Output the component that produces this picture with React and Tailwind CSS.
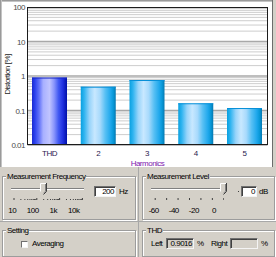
import React from "react";

const PLOT = { left: 27.5, top: 7.5, right: 267.5, bottom: 144.5 };
const DECADE = (145 - 7) / 4;

function yOf(v) {
  return 7 + (2 - Math.log10(v)) * DECADE;
}

const BARS = [
  { label: "THD", value: 0.9016, fill: "url(#thd)", edge: "#1828c8" },
  { label: "2", value: 0.49, fill: "url(#harm)", edge: "#0890d8" },
  { label: "3", value: 0.766, fill: "url(#harm)", edge: "#0890d8" },
  { label: "4", value: 0.162, fill: "url(#harm)", edge: "#0890d8" },
  { label: "5", value: 0.118, fill: "url(#harm)", edge: "#0890d8" },
];

const Y_LABELS = [
  { text: "100", y: 10 },
  { text: "10", y: 44.5 },
  { text: "1", y: 79 },
  { text: "0.1", y: 113.5 },
  { text: "0.01", y: 147.5 },
];

const FONT = "Liberation Sans, Arial, sans-serif";

function Chart() {
  const grid = [];
  for (let e = -2; e <= 1; e++) {
    for (let k = 1; k <= 9; k++) {
      grid.push({ y: yOf(k * 10 ** e), major: k === 1 });
    }
  }

  return (
    <svg width="276" height="167" className="block">
      <defs>
        <linearGradient id="thd" x1="0" x2="1" y1="0" y2="0">
          <stop offset="0" stopColor="#1a2ad0" />
          <stop offset="0.08" stopColor="#2a40ee" />
          <stop offset="0.2" stopColor="#6070f8" />
          <stop offset="0.32" stopColor="#a8b0ff" />
          <stop offset="0.5" stopColor="#c0c4ff" />
          <stop offset="0.63" stopColor="#8a96fc" />
          <stop offset="0.76" stopColor="#4058f2" />
          <stop offset="0.88" stopColor="#2030e0" />
          <stop offset="1" stopColor="#0010a8" />
        </linearGradient>
        <linearGradient id="harm" x1="0" x2="1" y1="0" y2="0">
          <stop offset="0" stopColor="#08a0e0" />
          <stop offset="0.1" stopColor="#30b4f0" />
          <stop offset="0.25" stopColor="#98d4fa" />
          <stop offset="0.4" stopColor="#c8e8ff" />
          <stop offset="0.55" stopColor="#a8dafc" />
          <stop offset="0.7" stopColor="#58c0f4" />
          <stop offset="0.85" stopColor="#20a8ec" />
          <stop offset="0.93" stopColor="#0898d8" />
          <stop offset="1" stopColor="#0678b0" />
        </linearGradient>
      </defs>

      <rect width="276" height="167" fill="#d4d0c8" />
      <rect width="273" height="167" fill="#ffffff" />
      <rect width="273" height="1" fill="#9a9a9a" />
      <rect y="1" width="273" height="1" fill="#c4c4c4" />
      <rect width="1" height="167" fill="#9a9a9a" />
      <rect x="1" width="1" height="167" fill="#c4c4c4" />
      <rect x="272" width="1" height="167" fill="#6c6c6c" />

      {grid.map((g, i) => (
        <line
          key={i}
          x1={PLOT.left}
          x2={PLOT.right}
          y1={g.y}
          y2={g.y}
          stroke={g.major ? "#a8a8a8" : "#cdcdcd"}
          strokeWidth={g.major ? 1.6 : 1}
        />
      ))}

      {BARS.map((b, i) => {
        const x = 32 + i * 48.75;
        const top = yOf(b.value);
        return (
          <g key={b.label}>
            <rect x={x} y={top} width="35" height={PLOT.bottom - top} fill={b.fill} />
            <rect x={x} y={top} width="35" height="1" fill={b.edge} />
            <text
              x={x + 17.5}
              y="155.5"
              textAnchor="middle"
              fontFamily={FONT}
              fontSize="8"
              fill="#2a1a50"
            >
              {b.label}
            </text>
          </g>
        );
      })}

      <rect
        x={PLOT.left}
        y={PLOT.top}
        width={PLOT.right - PLOT.left}
        height={PLOT.bottom - PLOT.top}
        fill="none"
        stroke="#1c1c1c"
      />

      {Y_LABELS.map((l) => (
        <text key={l.text} x="25" y={l.y} textAnchor="end" fontFamily={FONT} fontSize="8" fill="#4a4a4a">
          {l.text}
        </text>
      ))}

      <text
        transform="translate(10 74.5) rotate(-90)"
        textAnchor="middle"
        fontFamily={FONT}
        fontSize="8"
        fill="#1c1c1c"
      >
        Distortion [%]
      </text>
      <text x="147.5" y="165.5" textAnchor="middle" fontFamily={FONT} fontSize="8" fill="#8020b0">
        Harmonics
      </text>
    </svg>
  );
}

function GroupBox({ title, className, children }) {
  return (
    <fieldset
      className={`border border-[#9c9c9c] shadow-[inset_1px_1px_0_#fff,1px_1px_0_#fff] ${className}`}
    >
      <legend className="ml-[3px] px-[1px] leading-[9px] bg-[#d4d0c8]">{title}</legend>
      {children}
    </fieldset>
  );
}

function Thumb({ className }) {
  return (
    <svg width="7" height="12" className={`absolute ${className}`}>
      <path d="M0 0H7V8.5L3.5 12L0 8.5Z" fill="#d4d0c8" />
      <path d="M0.5 8.5V0.5H6" fill="none" stroke="#ffffff" />
      <path d="M6.5 0V8.5L3.5 11.5" fill="none" stroke="#404040" />
      <path d="M5.5 1V8.2L3.5 10.3" fill="none" stroke="#808080" />
    </svg>
  );
}

function Field({ value, className }) {
  return (
    <div
      className={`flex items-center justify-end h-[11px] pr-[1px] border border-t-[#707070] border-l-[#707070] border-b-[#f4f4f4] border-r-[#f4f4f4] shadow-[inset_1px_1px_0_#404040] leading-none ${className}`}
    >
      {value}
    </div>
  );
}

const FREQ_TICKS = (() => {
  const ticks = [];
  for (let e = 1; e <= 4; e++) {
    for (let k = 1; k <= 9; k++) {
      const f = k * 10 ** e;
      if (f > 10000) break;
      ticks.push({ x: 2.5 + Math.log10(f / 10) * 22.8, major: k === 1 });
    }
  }
  return ticks;
})();

const LEVEL_TICKS = [0, 1, 2, 3, 4, 5, 6].map((i) => 3.7 + i * 11.43);

export default function App() {
  return (
    <div className="w-[276px] h-[257px] overflow-hidden bg-[#d4d0c8] font-['Liberation_Sans',Arial,sans-serif] text-[8px] tracking-[-0.5px] text-black">
      <Chart />

      <div className="flex h-[55px] border-b border-[#a8a8a8]">
        <div className="w-[139px] border-r border-[#a8a8a8] pl-[2px] pt-[4.5px]">
          <GroupBox title="Measurement Frequency" className="w-[134px] h-[48px]">
            <div className="flex pl-[8px]">
              <div className="relative w-[73px]">
                <div className="mt-[7.5px] h-[2px] border-t border-[#808080] border-b border-b-white" />
                <Thumb className="left-[29px] top-[2.5px]" />
                <svg width="73" height="4" className="block mt-[8px]">
                  {FREQ_TICKS.map((t, i) => (
                    <rect key={i} x={t.x} y={t.major ? 0 : 1} width="1" height={t.major ? 2 : 1} fill="#404040" />
                  ))}
                </svg>
                <div className="flex ml-[-9px] mt-[4px] leading-[9px]">
                  <span className="w-[23px] text-center">10</span>
                  <span className="w-[23px] text-center">100</span>
                  <span className="w-[23px] text-center">1k</span>
                  <span className="w-[23px] text-center">10k</span>
                </div>
              </div>
              <div className="flex items-center mt-[5.5px] ml-[10px] h-[11px]">
                <Field value="200" className="w-[22px] bg-white" />
                <span className="ml-[3px]">Hz</span>
              </div>
            </div>
          </GroupBox>
        </div>
        <div className="flex-1 pl-[3px] pt-[4.5px]">
          <GroupBox title="Measurement Level" className="w-[133px] h-[48px]">
            <div className="flex pl-[8px]">
              <div className="relative w-[73px]">
                <div className="mt-[7.5px] h-[2px] border-t border-[#808080] border-b border-b-white" />
                <Thumb className="left-[69px] top-[2.5px]" />
                <svg width="73" height="4" className="block mt-[8px]">
                  {LEVEL_TICKS.map((x, i) => (
                    <rect key={i} x={x} y="0" width="1" height="2" fill="#404040" />
                  ))}
                </svg>
                <div className="flex ml-[-7.35px] mt-[4px] leading-[9px]">
                  <span className="w-[22.7px] text-center">-60</span>
                  <span className="w-[22.7px] text-center">-40</span>
                  <span className="w-[22.7px] text-center">-20</span>
                  <span className="w-[22.7px] text-center">0</span>
                </div>
              </div>
              <div className="flex items-center mt-[5.5px] ml-[14px] h-[11px]">
                <span className="w-[1px] h-[1px] bg-[#404040]" />
                <Field value="0" className="ml-[2px] w-[16px] bg-white" />
                <span className="ml-[2px]">dB</span>
              </div>
            </div>
          </GroupBox>
        </div>
      </div>

      <div className="flex h-[35px]">
        <div className="w-[139px] border-r border-[#a8a8a8] pl-[2px] pt-[3.5px]">
          <GroupBox title="Setting" className="w-[134px] h-[31px]">
            <div className="flex items-center pl-[18px] pt-[5px] h-[14px]">
              <span className="w-[7px] h-[7px] bg-white border border-t-[#707070] border-l-[#707070] border-b-[#f4f4f4] border-r-[#f4f4f4]" />
              <span className="ml-[4px]">Averaging</span>
            </div>
          </GroupBox>
        </div>
        <div className="flex-1 pl-[3px] pt-[3.5px]">
          <GroupBox title="THD" className="w-[133px] h-[31px]">
            <div className="flex items-center pl-[8px] pt-[3.5px] h-[14.5px]">
              <span className="w-[15px]">Left</span>
              <Field value="0.9016" className="w-[28px] h-[10px]" />
              <span className="ml-[3px] w-[14px]">%</span>
              <span className="w-[19px]">Right</span>
              <Field value="" className="w-[28px] h-[10px]" />
              <span className="ml-[3px]">%</span>
            </div>
          </GroupBox>
        </div>
      </div>
    </div>
  );
}
